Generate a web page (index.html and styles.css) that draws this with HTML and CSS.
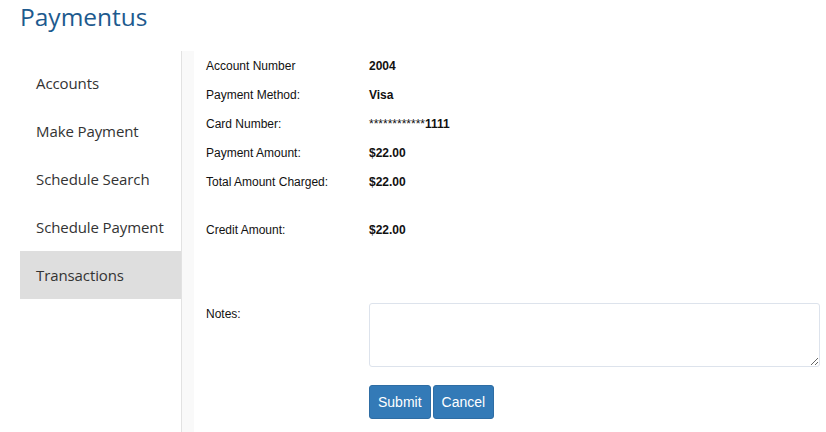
FILE: index.html
```html
<!DOCTYPE html>
<html>
<head>
<meta charset="utf-8">
<link rel="stylesheet" href="styles.css">
</head>
<body>
<header class="top">
  <h1 class="brand">Paymentus</h1>
</header>
<div class="layout">
  <nav class="side">
    <a class="nav-item">Accounts</a>
    <a class="nav-item">Make Payment</a>
    <a class="nav-item">Schedule Search</a>
    <a class="nav-item">Schedule Payment</a>
    <a class="nav-item active">Transactions</a>
  </nav>
  <div class="strip"></div>
  <main class="content">
    <div class="row"><span class="label">Account Number</span><span class="value">2004</span></div>
    <div class="row"><span class="label">Payment Method:</span><span class="value">Visa</span></div>
    <div class="row"><span class="label">Card Number:</span><span class="value"><span class="mask">************</span>1111</span></div>
    <div class="row"><span class="label">Payment Amount:</span><span class="value">$22.00</span></div>
    <div class="row"><span class="label">Total Amount Charged:</span><span class="value">$22.00</span></div>
    <div class="spacer"></div>
    <div class="row"><span class="label">Credit Amount:</span><span class="value">$22.00</span></div>
    <div class="notes-row">
      <span class="label notes-label">Notes:</span>
      <div class="notes-field">
        <textarea class="notes"></textarea>
        <div class="actions">
          <button class="btn">Submit</button>
          <button class="btn">Cancel</button>
        </div>
      </div>
    </div>
  </main>
</div>
</body>
</html>
```

FILE: styles.css
```css
html, body {
  margin: 0;
  padding: 0;
  background: #fff;
}
body {
  width: 826px;
  height: 432px;
  overflow: hidden;
  font-family: "Liberation Sans", Arial, sans-serif;
}
.top {
  height: 51px;
  padding-left: 20px;
  box-sizing: border-box;
}
.brand {
  margin: 0;
  padding-top: 1px;
  font-family: "Open Sans", "Noto Sans", sans-serif;
  font-weight: 400;
  font-size: 24.5px;
  line-height: 32px;
  color: #1d5a8e;
  letter-spacing: 0;
}
.layout {
  display: flex;
  height: 381px;
}
.side {
  width: 161px;
  margin-left: 20px;
  padding-top: 8px;
  border-right: 1px solid #e2e2e2;
  display: flex;
  flex-direction: column;
}
.nav-item {
  display: block;
  height: 48px;
  line-height: 48px;
  padding-left: 16px;
  font-family: "Open Sans", "Noto Sans", sans-serif;
  font-size: 15px;
  color: #333;
  letter-spacing: -0.1px;
}
.nav-item.active {
  background: #dedede;
}
.strip {
  width: 12px;
  background: #f9f9f9;
}
.content {
  flex: 1;
  padding-top: 1px;
  padding-left: 12px;
  padding-right: 6px;
  font-size: 12px;
  color: #111;
}
.row {
  display: flex;
  height: 29px;
  line-height: 29px;
}
.label {
  width: 163px;
  flex: none;
}
.value {
  font-weight: 700;
}
.mask {
  font-weight: 400;
}
.spacer {
  height: 19px;
}
.notes-row {
  display: flex;
  margin-top: 58px;
}
.notes-label {
  padding-top: 4px;
  line-height: 14px;
}
.notes-field {
  flex: 1;
  display: flex;
  flex-direction: column;
}
.notes {
  display: block;
  width: 100%;
  height: 64px;
  box-sizing: border-box;
  border: 1px solid #dde3ec;
  border-radius: 3px;
  margin: 0;
  resize: vertical;
  font-family: inherit;
}
.actions {
  display: flex;
  gap: 2px;
  margin-top: 18px;
}
.btn {
  height: 34px;
  padding: 0 8px;
  border: 1px solid #2e6da4;
  border-radius: 3px;
  background: #337ab7;
  color: #fff;
  font-family: "Liberation Sans", Arial, sans-serif;
  font-size: 14px;
}
```
